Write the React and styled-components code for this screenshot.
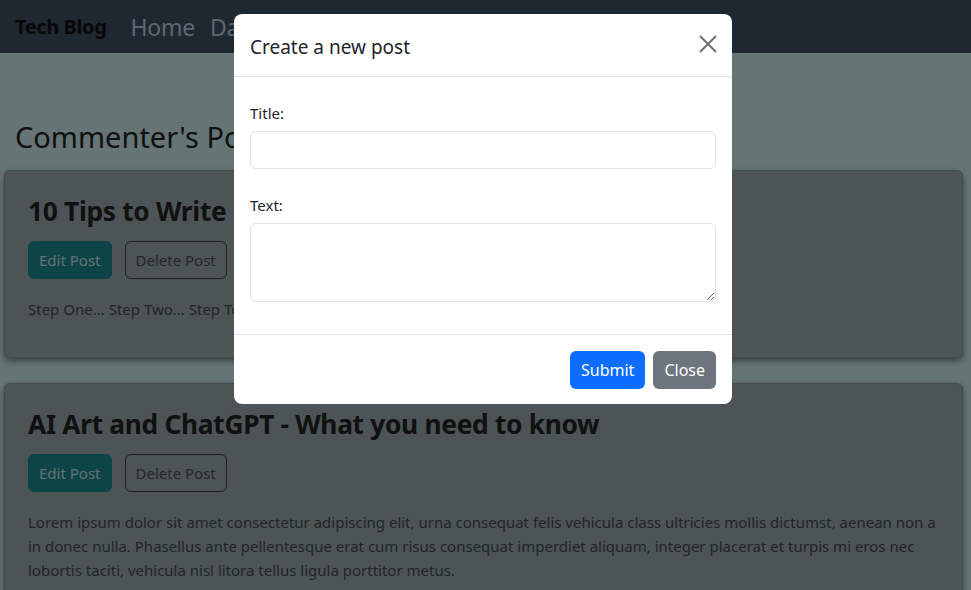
import styled, { createGlobalStyle } from 'styled-components';

const GlobalStyle = createGlobalStyle`
    html, body {
        margin:0;
        padding:0;
        background:#cae8e8;
        font-family:"Noto Sans", "Open Sans", "Liberation Sans", sans-serif;
        color:#212529;
        overflow:hidden;
    }
    * { box-sizing:border-box; }
`

const posts = [
    {
        title: "10 Tips to Write Clean Code That Your Team Will Love",
        text: "Step One... Step Two... Step Ten... Step Eleven...",
    },
    {
        title: "AI Art and ChatGPT - What you need to know",
        text: "Lorem ipsum dolor sit amet consectetur adipiscing elit, urna consequat felis vehicula class ultricies mollis dictumst, aenean non a in donec nulla. Phasellus ante pellentesque erat cum risus consequat imperdiet aliquam, integer placerat et turpis mi eros nec lobortis taciti, vehicula nisl litora tellus ligula porttitor metus.",
    },
]

function App() {
    return (
        <Page>
            <GlobalStyle />
            <Navbar>
                <Brand>Tech Blog</Brand>
                <NavLink>Home</NavLink>
                <NavLink>Dashboard</NavLink>
                <NavLink>Logout</NavLink>
            </Navbar>
            <Main>
                <PageTitle>Commenter's Posts</PageTitle>
                {posts.map((post, index) => (
                    <Card key={index}>
                        <CardTitle>{post.title}</CardTitle>
                        <ButtonRow>
                            <EditButton>Edit Post</EditButton>
                            <DeleteButton>Delete Post</DeleteButton>
                        </ButtonRow>
                        <CardText>{post.text}</CardText>
                    </Card>
                ))}
            </Main>

            {/* modal open: backdrop + dialog sit over the page */}
            <Backdrop />
            <ModalLayer>
                <Dialog>
                    <ModalHeader>
                        <ModalTitle>Create a new post</ModalTitle>
                        <CloseIcon aria-label="Close">
                            <svg width="18" height="18" viewBox="0 0 18 18">
                                <path d="M1 1 L17 17 M17 1 L1 17" stroke="#6c6f72" strokeWidth="2" fill="none" />
                            </svg>
                        </CloseIcon>
                    </ModalHeader>
                    <ModalBody>
                        <Field>
                            <Label>Title:</Label>
                            <Input type="text" />
                        </Field>
                        <Field>
                            <Label>Text:</Label>
                            <TextArea rows={3} />
                        </Field>
                    </ModalBody>
                    <ModalFooter>
                        <FooterButton $variant="primary">Submit</FooterButton>
                        <FooterButton $variant="secondary">Close</FooterButton>
                    </ModalFooter>
                </Dialog>
            </ModalLayer>
        </Page>
    )
}

export default App

const Page = styled.div`
    position:relative;
    width:971px;
    height:590px;
    overflow:hidden;
`
const Navbar = styled.nav`
    height:53px;
    background:#3e4e62;
    display:flex;
    align-items:center;
    padding:0 15px;
    gap:15px;
`
const Brand = styled.div`
    font-size:20px;
    font-weight:700;
    color:#111;
    margin-right:9px;
    letter-spacing:-0.4px;
`
const NavLink = styled.div`
    font-size:23px;
    color:#bacfde;
    letter-spacing:-0.2px;
`
const Main = styled.main`
    padding:0 8px 0 4px;
    display:flex;
    flex-direction:column;
    gap:25px;
`
const PageTitle = styled.h2`
    margin:66px 0 -10px 11px;
    font-size:29px;
    font-weight:400;
    line-height:36px;
    color:#222;
`
const Card = styled.div`
    background:#98a8ac;
    border-radius:6px;
    border:1px solid #8a989c;
    box-shadow:0 3px 6px rgba(0,0,0,0.45);
    padding:24px 23px;
`
const CardTitle = styled.h3`
    margin:0 0 14px;
    font-size:26.3px;
    font-weight:700;
    line-height:32px;
    color:#222;
    white-space:nowrap;
    letter-spacing:-0.3px;
`
const ButtonRow = styled.div`
    display:flex;
    gap:13px;
    margin-bottom:18px;
`
const BaseButton = styled.button`
    font-family:inherit;
    font-size:15px;
    line-height:24px;
    padding:6px 10px;
    border-radius:6px;
    cursor:pointer;
`
const EditButton = styled(BaseButton)`
    background:#1a8890;
    border:1px solid #1a8890;
    color:#c8e0e2;
`
const DeleteButton = styled(BaseButton)`
    background:transparent;
    border:1px solid #3a3f42;
    color:#4a5052;
`
const CardText = styled.p`
    margin:0 0 12px;
    font-size:15px;
    line-height:24px;
    color:#454b4e;
`
const Backdrop = styled.div`
    position:absolute;
    inset:0;
    background:rgba(0,0,0,0.5);
`
const ModalLayer = styled.div`
    position:absolute;
    inset:0;
    padding:14px 0 0 234px;
`
const Dialog = styled.div`
    width:498px;
    background:#fff;
    border-radius:8px;
    overflow:hidden;
`
const ModalHeader = styled.div`
    height:63px;
    display:flex;
    align-items:center;
    justify-content:space-between;
    padding:3px 15px 0 16px;
    border-bottom:1px solid #dee2e6;
`
const ModalTitle = styled.h5`
    margin:0;
    font-size:19px;
    font-weight:400;
    color:#212529;
    line-height:28px;
`
const CloseIcon = styled.button`
    border:none;
    background:transparent;
    padding:0;
    width:18px;
    height:18px;
    display:flex;
    margin-top:-5px;
    cursor:pointer;
`
const ModalBody = styled.div`
    padding:24px 16px 32px;
    display:flex;
    flex-direction:column;
    gap:24px;
`
const Field = styled.div`
    display:flex;
    flex-direction:column;
    gap:6px;
`
const Label = styled.label`
    font-size:15px;
    line-height:24px;
    color:#212529;
`
const Input = styled.input`
    height:38px;
    border:1px solid #dee2e6;
    border-radius:6px;
    font-family:inherit;
    font-size:16px;
    padding:6px 12px;
    outline:none;
`
const TextArea = styled.textarea`
    height:79px;
    border:1px solid #dee2e6;
    border-radius:6px;
    font-family:inherit;
    font-size:16px;
    padding:6px 12px;
    resize:vertical;
    outline:none;
`
const ModalFooter = styled.div`
    border-top:1px solid #dee2e6;
    padding:16px 16px 15px;
    display:flex;
    justify-content:flex-end;
    gap:8px;
`
const FooterButton = styled.button`
    font-family:inherit;
    font-size:16px;
    line-height:24px;
    height:38px;
    padding:6px 11px;
    border-radius:6px;
    border:none;
    cursor:pointer;
    color:#fff;
    background:${props => props.$variant === 'primary' ? '#0d6efd' : '#6c757d'};
`
